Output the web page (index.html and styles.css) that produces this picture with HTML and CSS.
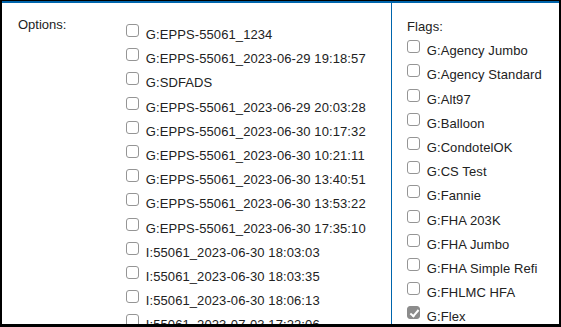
FILE: index.html
```html
<!DOCTYPE html>
<html lang="en">
<head>
  <meta charset="UTF-8">
  <meta name="viewport" content="width=device-width, initial-scale=1.0">
  <title>Options and Flags</title>
  <link rel="stylesheet" href="styles.css">
</head>
<body>
  <div class="frame">
    <div class="panel">
      <div class="options-cell">
        <div class="cell-label">Options:</div>
        <div class="option-list">
          <label class="item"><input type="checkbox"> G:EPPS-55061_1234</label>
          <label class="item"><input type="checkbox"> G:EPPS-55061_2023-06-29 19:18:57</label>
          <label class="item"><input type="checkbox"> G:SDFADS</label>
          <label class="item"><input type="checkbox"> G:EPPS-55061_2023-06-29 20:03:28</label>
          <label class="item"><input type="checkbox"> G:EPPS-55061_2023-06-30 10:17:32</label>
          <label class="item"><input type="checkbox"> G:EPPS-55061_2023-06-30 10:21:11</label>
          <label class="item"><input type="checkbox"> G:EPPS-55061_2023-06-30 13:40:51</label>
          <label class="item"><input type="checkbox"> G:EPPS-55061_2023-06-30 13:53:22</label>
          <label class="item"><input type="checkbox"> G:EPPS-55061_2023-06-30 17:35:10</label>
          <label class="item"><input type="checkbox"> I:55061_2023-06-30 18:03:03</label>
          <label class="item"><input type="checkbox"> I:55061_2023-06-30 18:03:35</label>
          <label class="item"><input type="checkbox"> I:55061_2023-06-30 18:06:13</label>
          <label class="item"><input type="checkbox"> I:55061_2023-07-03 17:22:06</label>
        </div>
      </div>
      <div class="flags-cell">
        <div class="item flags-label">Flags:</div>
        <label class="item"><input type="checkbox"> G:Agency Jumbo</label>
        <label class="item"><input type="checkbox"> G:Agency Standard</label>
        <label class="item"><input type="checkbox"> G:Alt97</label>
        <label class="item"><input type="checkbox"> G:Balloon</label>
        <label class="item"><input type="checkbox"> G:CondotelOK</label>
        <label class="item"><input type="checkbox"> G:CS Test</label>
        <label class="item"><input type="checkbox"> G:Fannie</label>
        <label class="item"><input type="checkbox"> G:FHA 203K</label>
        <label class="item"><input type="checkbox"> G:FHA Jumbo</label>
        <label class="item"><input type="checkbox"> G:FHA Simple Refi</label>
        <label class="item"><input type="checkbox"> G:FHLMC HFA</label>
        <label class="item"><input type="checkbox" checked> G:Flex</label>
        <label class="item"><input type="checkbox"> G:Freddie</label>
      </div>
    </div>
  </div>
</body>
</html>
```
FILE: styles.css
```css
html, body { margin: 0; height: 100%; }
body { background: #000; font-family: "Liberation Sans", Arial, sans-serif; font-size: 13px; color: #222; }
.frame { box-sizing: border-box; height: 327px; padding: 1px 2px 3px 2px; }
.panel { display: flex; height: 100%; box-sizing: border-box; background: #fff; border-top: 2px solid #0065ac; overflow: hidden; }
.options-cell { display: flex; width: 389px; flex-shrink: 0; border-right: 1px solid #0065ac; }
.cell-label { width: 104px; padding: 14px 0 0 16px; flex-shrink: 0; }
.option-list { padding-top: 20px; }
.flags-cell { padding: 12px 0 0 15px; flex: 1; }
.item { display: block; height: 24.2px; line-height: 24.2px; white-space: nowrap; letter-spacing: 0.1px; }

/* checkbox drawn by hand so it matches the soft grey boxes */
.item input {
  appearance: none;
  -webkit-appearance: none;
  position: relative;
  box-sizing: border-box;
  width: 13px;
  height: 13px;
  margin: 0 3px 2px 4px;
  border: 1px solid #959595;
  border-radius: 3px;
  background: #fff;
  vertical-align: baseline;
}
.item input:checked { background: #8c8c8c; border-color: #8c8c8c; }
.item input:checked::after {
  content: "";
  position: absolute;
  left: 3.5px;
  top: 0.5px;
  width: 3px;
  height: 7px;
  border: solid #fff;
  border-width: 0 2px 2px 0;
  transform: rotate(40deg);
}
.flags-cell .item input { margin-left: 0; }
```
